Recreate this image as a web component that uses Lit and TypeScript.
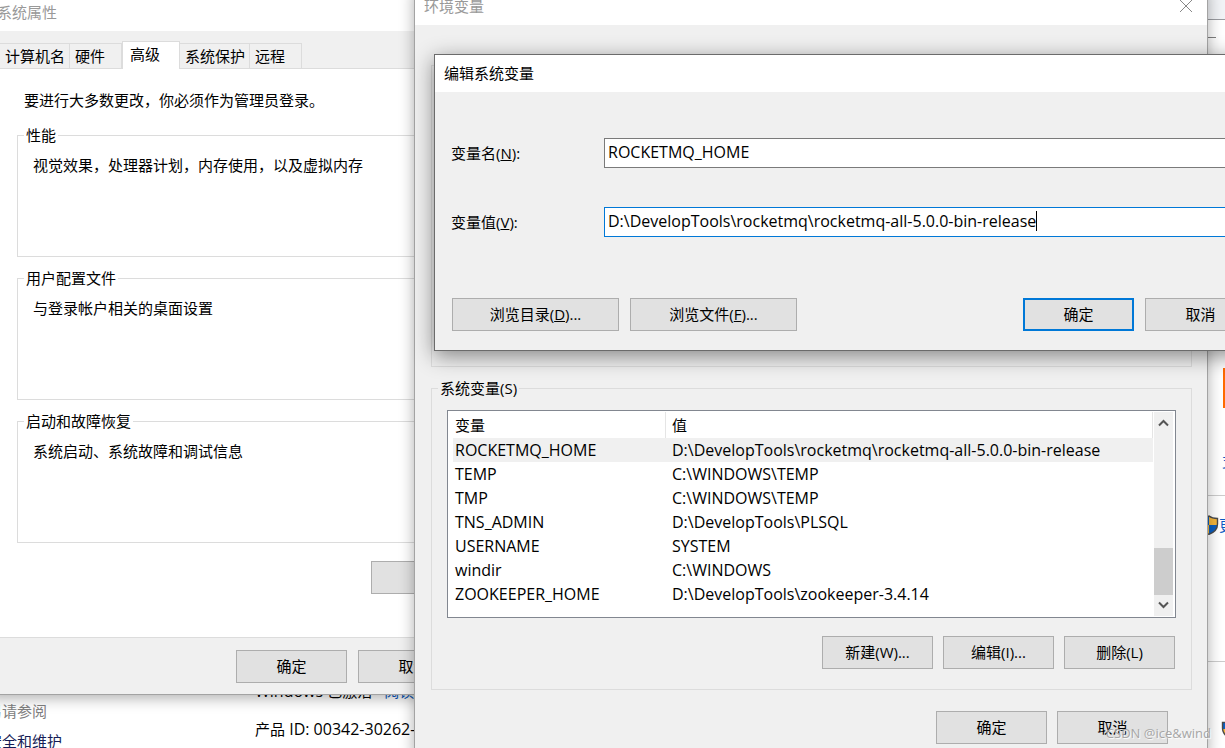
import { LitElement, html, css, svg } from "lit";
import { customElement, property, state } from "lit/decorators.js";

const controls = css`
  * {
    box-sizing: border-box;
  }
  button {
    min-width: 111px;
    height: 33px;
    padding: 0 8px 2px;
    border: 1px solid #adadad;
    border-radius: 0;
    background: #e1e1e1;
    color: #000;
    font: inherit;
    white-space: nowrap;
  }
  button.default {
    border: 2px solid #0078d7;
  }
  fieldset {
    min-width: 0;
    margin: 0;
    padding: 0;
    border: 1px solid #dcdcdc;
  }
  legend {
    margin-left: 6px;
    padding: 0 2px;
    line-height: 20px;
  }
  p {
    margin: 0;
  }
`;

@customElement("win-frame")
export class WinFrame extends LitElement {
  @property() heading = "";
  @property({ type: Boolean, reflect: true }) active = false;
  @property({ type: Boolean }) closable = false;

  static styles = css`
    :host {
      display: block;
      box-sizing: border-box;
      border: 1px solid #a3a3a3;
      background: #f0f0f0;
      box-shadow: 0 3px 14px rgba(0, 0, 0, 0.32);
    }
    :host([active]) {
      border-color: #6b6b6b;
      box-shadow: 0 5px 20px rgba(0, 0, 0, 0.45);
    }
    .bar {
      box-sizing: border-box;
      display: flex;
      align-items: center;
      justify-content: space-between;
      height: 37px;
      padding: 0 14px 2px 9px;
      background: #fff;
      color: #999;
    }
    :host([active]) .bar {
      color: #000;
    }
    h2 {
      margin: 0;
      font: inherit;
    }
    .close {
      display: flex;
      padding: 0;
      border: 0;
      background: none;
      color: #888;
    }
  `;

  render() {
    return html`
      <header class="bar">
        <h2>${this.heading}</h2>
        ${this.closable
          ? html`<button class="close" aria-label="关闭">
              <svg width="14" height="14" viewBox="0 0 14 14" fill="none" stroke="currentColor">
                <path d="M1 1L13 13M13 1L1 13" />
              </svg>
            </button>`
          : ""}
      </header>
      <slot></slot>
    `;
  }
}

@customElement("system-properties")
export class SystemProperties extends LitElement {
  private tabs = ["计算机名", "硬件", "高级", "系统保护", "远程"];
  private groups = [
    ["性能", "视觉效果，处理器计划，内存使用，以及虚拟内存"],
    ["用户配置文件", "与登录帐户相关的桌面设置"],
    ["启动和故障恢复", "系统启动、系统故障和调试信息"],
  ];
  @state() private current = "高级";

  static styles = [
    controls,
    css`
      :host {
        display: block;
      }
      .tabs {
        display: flex;
        align-items: flex-end;
        height: 37px;
        padding-left: 12px;
      }
      .tabs button {
        min-width: 52px;
        height: 25px;
        padding: 0 4px 0 5px;
        border: solid #dcdcdc;
        border-width: 1px 1px 0 0;
        background: #f0f0f0;
        text-align: left;
      }
      .tabs button.current {
        min-width: 58px;
        height: 28px;
        margin-bottom: -1px;
        padding: 0 7px 3px;
        border-left-width: 1px;
        background: #fff;
      }
      .pane {
        display: flex;
        flex-direction: column;
        gap: 11px;
        padding: 21px 19px 43px 29px;
        border-top: 1px solid #dcdcdc;
        background: #fff;
      }
      .note {
        padding: 0 0 4px 7px;
        line-height: 20px;
      }
      fieldset {
        min-height: 132px;
      }
      fieldset p {
        padding: 10px 15px;
        line-height: 20px;
      }
      .env {
        align-self: flex-end;
        width: 213px;
        margin-top: 7px;
      }
      .foot {
        display: flex;
        justify-content: flex-end;
        gap: 11px;
        padding: 12px 12px 11px;
        border-top: 1px solid #dcdcdc;
      }
    `,
  ];

  render() {
    return html`
      <nav class="tabs" role="tablist">
        ${this.tabs.map(
          (t) => html`<button
            role="tab"
            class=${t === this.current ? "current" : ""}
            aria-selected=${t === this.current}
            @click=${() => (this.current = t)}
          >${t}</button>`
        )}
      </nav>
      <section class="pane">
        <p class="note">要进行大多数更改，你必须作为管理员登录。</p>
        ${this.groups.map(
          ([name, text]) => html`<fieldset><legend>${name}</legend><p>${text}</p></fieldset>`
        )}
        <button class="env" aria-label="环境变量"></button>
      </section>
      <footer class="foot">
        <button>确定</button>
        <button>取消</button>
        <button aria-label="应用"></button>
      </footer>
    `;
  }
}

@customElement("environment-variables")
export class EnvironmentVariables extends LitElement {
  private rows = [
    ["ROCKETMQ_HOME", "D:\\DevelopTools\\rocketmq\\rocketmq-all-5.0.0-bin-release"],
    ["TEMP", "C:\\WINDOWS\\TEMP"],
    ["TMP", "C:\\WINDOWS\\TEMP"],
    ["TNS_ADMIN", "D:\\DevelopTools\\PLSQL"],
    ["USERNAME", "SYSTEM"],
    ["windir", "C:\\WINDOWS"],
    ["ZOOKEEPER_HOME", "D:\\DevelopTools\\zookeeper-3.4.14"],
  ];

  static styles = [
    controls,
    css`
      :host {
        display: flex;
        flex-direction: column;
        gap: 11px;
        padding: 40px 15px 11px 16px;
      }
      fieldset {
        min-height: 302px;
      }
      .list {
        display: flex;
        align-items: flex-start;
        height: 208px;
        margin: 12px 15px 18px;
        padding: 1px;
        border: 1px solid #828790;
        background: #fff;
      }
      table {
        flex: 1;
        min-width: 0;
        margin: 0 1px 0 4px;
        border-collapse: separate;
        border-spacing: 0;
        table-layout: fixed;
      }
      th,
      td {
        height: 24px;
        padding: 0 2px;
        font-weight: normal;
        line-height: 24px;
        text-align: left;
        white-space: nowrap;
      }
      td {
        font-size: 16px;
      }
      th {
        height: 26px;
        border-right: 1px solid #e5e5e5;
      }
      th:first-child {
        width: 213px;
      }
      th:last-child,
      td:last-child {
        padding-left: 6px;
      }
      .selected td {
        background: #f0f0f0;
      }
      .scroll {
        display: flex;
        flex-direction: column;
        align-items: center;
        align-self: stretch;
        width: 19px;
        margin-right: 1px;
        padding: 7px 0;
        background: #f0f0f0;
      }
      .thumb {
        align-self: stretch;
        height: 47px;
        margin: auto 0 6px;
        background: #cdcdcd;
      }
      .actions {
        display: flex;
        justify-content: flex-end;
        gap: 10px;
      }
      fieldset .actions {
        padding: 0 16px 20px;
      }
      .foot {
        padding: 10px 24px 0;
      }
    `,
  ];

  private arrow(up: boolean) {
    return html`<svg width="11" height="8" viewBox="0 0 11 8" fill="none" stroke="#555" stroke-width="2">
      ${up ? svg`<path d="M1 6.5L5.5 2L10 6.5" />` : svg`<path d="M1 1.5L5.5 6L10 1.5" />`}
    </svg>`;
  }

  render() {
    return html`
      <fieldset aria-label="用户变量"></fieldset>
      <fieldset>
        <legend>系统变量(S)</legend>
        <div class="list">
          <table>
            <thead>
              <tr><th scope="col">变量</th><th scope="col">值</th></tr>
            </thead>
            <tbody>
              ${this.rows.map(
                ([name, value], i) => html`<tr class=${i === 0 ? "selected" : ""}>
                  <td>${name}</td><td>${value}</td>
                </tr>`
              )}
            </tbody>
          </table>
          <div class="scroll">${this.arrow(true)}<div class="thumb"></div>${this.arrow(false)}</div>
        </div>
        <div class="actions">
          <button>新建(W)...</button>
          <button>编辑(I)...</button>
          <button>删除(L)</button>
        </div>
      </fieldset>
      <footer class="actions foot">
        <button>确定</button>
        <button>取消</button>
      </footer>
    `;
  }
}

@customElement("edit-variable")
export class EditVariable extends LitElement {
  static styles = [
    controls,
    css`
      :host {
        display: block;
        padding: 46px 17px 19px 16px;
      }
      .fields {
        display: grid;
        grid-template-columns: 153px 1fr;
        row-gap: 39px;
        align-items: center;
      }
      .box {
        display: flex;
        align-items: center;
        height: 30px;
        padding: 0 0 3px 3px;
        border: 1px solid #7a7a7a;
        background: #fff;
      }
      .box.focused {
        border-color: #0078d7;
      }
      input {
        field-sizing: content;
        min-width: 0;
        height: 24px;
        padding: 0;
        border: 0;
        outline: 0;
        background: none;
        color: #000;
        font: inherit;
        font-size: 16px;
      }
      .caret {
        width: 1px;
        height: 20px;
        background: #000;
      }
      .actions {
        display: flex;
        gap: 11px;
        margin-top: 61px;
        padding-left: 1px;
      }
      .browse {
        width: 167px;
      }
      .default {
        margin-left: auto;
      }
    `,
  ];

  render() {
    return html`
      <div class="fields">
        <label for="name">变量名(<u>N</u>):</label>
        <div class="box"><input id="name" type="text" value="ROCKETMQ_HOME" /></div>
        <label for="value">变量值(<u>V</u>):</label>
        <div class="box focused">
          <input id="value" type="text" value="D:\\DevelopTools\\rocketmq\\rocketmq-all-5.0.0-bin-release" /><span
            class="caret"
          ></span>
        </div>
      </div>
      <div class="actions">
        <button class="browse">浏览目录(<u>D</u>)...</button>
        <button class="browse">浏览文件(<u>F</u>)...</button>
        <button class="default">确定</button>
        <button>取消</button>
      </div>
    `;
  }
}

@customElement("app-root")
export class AppRoot extends LitElement {
  static styles = css`
    * {
      box-sizing: border-box;
    }
    :host {
      display: block;
      position: relative;
      height: 100vh;
      overflow: hidden;
      background: #fff;
      color: #000;
      font: 15px/20px "Open Sans", "Noto Sans CJK SC", sans-serif;
    }
    p {
      margin: 0;
    }
    a {
      color: #0a5bc4;
      text-decoration: none;
    }
    .about {
      display: flex;
      align-items: flex-end;
      height: 100%;
    }
    .side {
      display: grid;
      gap: 10px;
      width: 268px;
      margin: 0 0 -3px -13px;
      color: #808080;
    }
    .side a {
      color: #151c55;
    }
    .info {
      display: grid;
      flex: 1;
      gap: 18px;
      padding-bottom: 9px;
    }
    .info a {
      margin-left: 8px;
    }
    .latin {
      font-size: 16px;
    }
    .rail {
      display: flex;
      flex-direction: column;
      align-self: stretch;
      width: 18px;
      overflow: hidden;
      white-space: nowrap;
    }
    .rail-bar {
      height: 20px;
      border-bottom: 1px solid #999ba0;
      background: #f1f3f6;
    }
    .rail-menu {
      width: 9px;
      height: 18px;
      border-bottom: 1px solid #808080;
    }
    .rail-mark {
      height: 40px;
      margin: 330px 0 43px 16px;
      background: #ff6a00;
    }
    .rail-link {
      padding-left: 15px;
    }
    .rail-row {
      display: flex;
      align-items: center;
      height: 167px;
      margin-top: 24px;
      padding-bottom: 107px;
      border: solid #ccc;
      border-width: 1px 0;
    }
    .shield {
      flex: none;
      margin-left: -8px;
    }
    .rail-end {
      padding: 57px 0 0 22px;
    }
    .window {
      position: absolute;
    }
    .props {
      top: -7px;
      left: -13px;
      width: 617px;
    }
    .env {
      top: -13px;
      right: 17px;
      left: 414px;
    }
    .edit {
      top: 54px;
      right: -49px;
      left: 434px;
    }
    .mark {
      position: absolute;
      right: 14px;
      bottom: 5px;
      color: #a6a6a6;
      font-size: 13px;
      text-shadow: 1px 1px 1px #fff;
    }
  `;

  private shield() {
    return html`<svg class="shield" width="20" height="20" viewBox="0 0 20 20">
      <path d="M10 1C7.500 3 5 3.500 1.500 3.500V10H10Z" fill="#0a5fc2" />
      <path d="M10 1C12.500 3 15 3.500 18.500 3.500V10H10Z" fill="#f6b73c" />
      <path d="M1.500 10C2 14 5 17.500 10 19.300V10Z" fill="#f6b73c" />
      <path d="M18.500 10C18 14 15 17.500 10 19.300V10Z" fill="#0a5fc2" />
      <path
        d="M10 1C12.500 3 15 3.500 18.500 3.500V9C18.500 13.500 15 17.500 10 19.300C5 17.500 1.500 13.500 1.500 9V3.500C5 3.500 7.500 3 10 1Z"
        fill="none"
        stroke="#4a4a4a"
        stroke-width="1.400"
      />
    </svg>`;
  }

  render() {
    return html`
      <main class="about">
        <nav class="side">
          <p>另请参阅</p>
          <a href="#">安全和维护</a>
        </nav>
        <section class="info">
          <p><span class="latin">Windows </span>已激活 <a href="#">阅读</a></p>
          <p>产品<span class="latin"> ID: 00342-30262-</span></p>
        </section>
        <aside class="rail">
          <div class="rail-bar"></div>
          <div class="rail-menu"></div>
          <div class="rail-mark"></div>
          <a class="rail-link" href="#">支持</a>
          <div class="rail-row">${this.shield()}<a href="#">更改设置</a></div>
          <div class="rail-end">${this.shield()}</div>
        </aside>
      </main>
      <win-frame class="window props" heading="系统属性">
        <system-properties></system-properties>
      </win-frame>
      <win-frame class="window env" heading="环境变量" closable>
        <environment-variables></environment-variables>
      </win-frame>
      <win-frame class="window edit" heading="编辑系统变量" active>
        <edit-variable></edit-variable>
      </win-frame>
      <span class="mark">CSDN @ice&amp;wind</span>
    `;
  }
}
